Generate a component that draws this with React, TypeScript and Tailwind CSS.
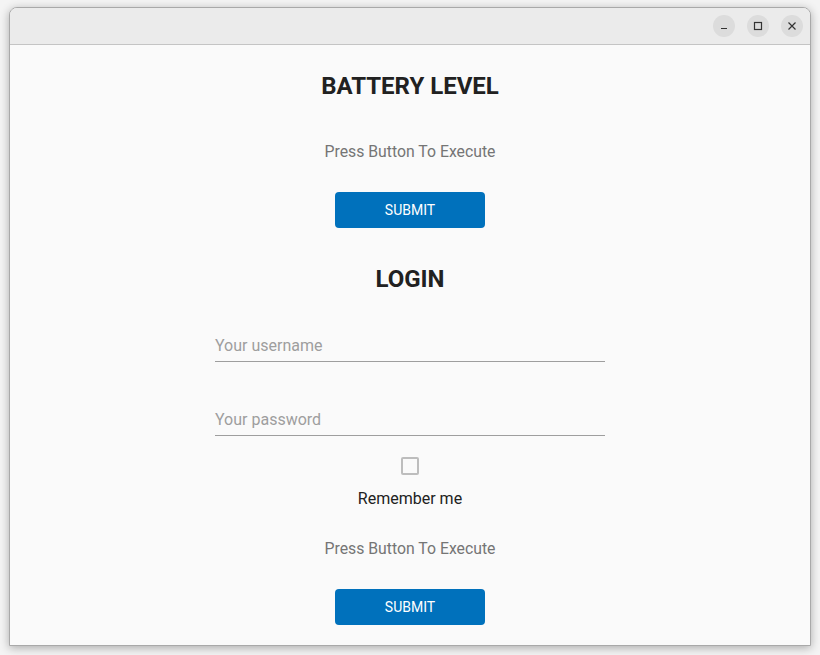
import React from "react";

function WinButton({ children }: { children: React.ReactNode }) {
  return (
    <div className="flex h-[22px] w-[22px] items-center justify-center rounded-full bg-[#dcdcdc] text-[#333]">
      {children}
    </div>
  );
}

function SubmitButton() {
  return (
    <button className="h-[36px] w-[150px] rounded-[4px] bg-[#0071bc] text-[14px] leading-[36px] text-white">
      SUBMIT
    </button>
  );
}

export default function App() {
  return (
    <div
      className="h-[655px] w-[820px] overflow-hidden bg-[#f4f4f4] pl-[9px] pt-[7px]"
      style={{ fontFamily: "Roboto, 'Liberation Sans', sans-serif" }}
    >
      <div className="flex h-[639px] w-[802px] flex-col overflow-hidden rounded-t-[8px] border border-[#a9a9a9] bg-[#fafafa] shadow-[0_2px_10px_rgba(0,0,0,0.3)]">
        {/* title bar */}
        <div className="flex h-[37px] items-center justify-end gap-[12px] border-b border-[#c4c4c4] bg-[#ebebeb] pr-[7px]">
          <WinButton>
            <svg width="10" height="10" viewBox="0 0 10 10">
              <path d="M2 7.5h6" stroke="currentColor" strokeWidth="1.2" />
            </svg>
          </WinButton>
          <WinButton>
            <svg width="10" height="10" viewBox="0 0 10 10">
              <rect x="1.5" y="1.5" width="7" height="7" fill="none" stroke="currentColor" strokeWidth="1.2" />
            </svg>
          </WinButton>
          <WinButton>
            <svg width="10" height="10" viewBox="0 0 10 10">
              <path d="M1.5 1.5l7 7M8.5 1.5l-7 7" stroke="currentColor" strokeWidth="1.2" />
            </svg>
          </WinButton>
        </div>

        {/* content */}
        <div className="flex flex-col items-center">
          <h1 className="mt-[27px] text-[24px] font-bold leading-[28px] text-[#212121]">BATTERY LEVEL</h1>
          <p className="mt-[40px] text-[15.8px] leading-[24px] text-[#757575]">Press Button To Execute</p>
          <div className="mt-[28px]">
            <SubmitButton />
          </div>

          <h1 className="mt-[37px] text-[24px] font-bold leading-[28px] text-[#212121]">LOGIN</h1>

          <div className="mt-[40px] w-[390px] border-b border-[#9e9e9e] pb-[3px] pt-[1px] text-[16px] leading-[24px] text-[#9e9e9e]">
            Your username
          </div>
          <div className="mt-[45px] w-[390px] border-b border-[#9e9e9e] pb-[3px] pt-[1px] text-[16px] leading-[24px] text-[#9e9e9e]">
            Your password
          </div>

          <div className="mt-[21px] h-[18px] w-[18px] rounded-[2px] border-2 border-[#bdbdbd]" />
          <p className="mt-[12px] text-[16px] leading-[24px] text-[#212121]">Remember me</p>
          <p className="mt-[26px] text-[15.8px] leading-[24px] text-[#757575]">Press Button To Execute</p>
          <div className="mt-[28px]">
            <SubmitButton />
          </div>
        </div>
      </div>
    </div>
  );
}
